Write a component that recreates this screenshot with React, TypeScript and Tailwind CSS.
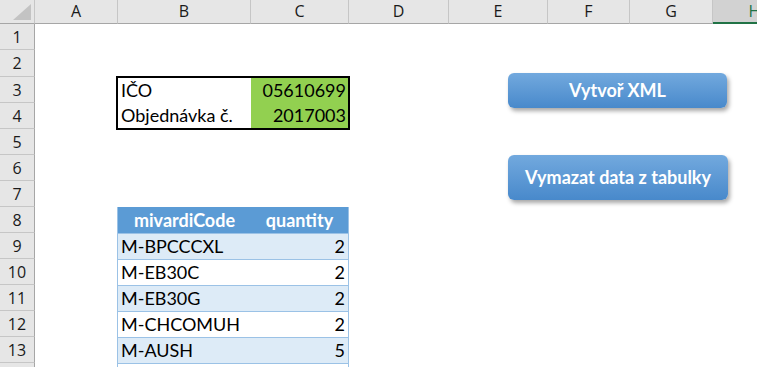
import React from "react";

const cols: { label: string; w: string; sel?: boolean }[] = [
  { label: "A", w: "w-[83px]" },
  { label: "B", w: "w-[133px]" },
  { label: "C", w: "w-[98px]" },
  { label: "D", w: "w-[100px]" },
  { label: "E", w: "w-[99px]" },
  { label: "F", w: "w-[82px]" },
  { label: "G", w: "w-[83px]" },
  { label: "H", w: "w-[83px]", sel: true },
];

const rowHeights = ["h-[26px]", "h-[27px]", "h-[26px]", "h-[26px]", "h-[26px]", "h-[26px]", "h-[26px]", "h-[26px]", "h-[26px]", "h-[26px]", "h-[26px]", "h-[26px]", "h-[26px]"];

const data = [
  { code: "M-BPCCCXL", q: 2 },
  { code: "M-EB30C", q: 2 },
  { code: "M-EB30G", q: 2 },
  { code: "M-CHCOMUH", q: 2 },
  { code: "M-AUSH", q: 5 },
];

export default function App() {
  return (
    <div className="relative w-[757px] h-[367px] overflow-hidden bg-white">
      {/* Column headers */}
      <div className="flex h-[24px] font-['Open_Sans',sans-serif] text-[16px] text-[#1a1a1a]">
        <div className="relative w-[35px] shrink-0 h-full bg-[#e6e6e6] border-r border-b border-[#a6a6a6] border-r-[#c6c6c6]">
          <svg className="absolute left-0 top-0" width="34" height="23" viewBox="0 0 34 23">
            <polygon points="31,4 31,20 13,20" fill="#c3c3c3" />
          </svg>
        </div>
        {cols.map((c) => (
          <div
            key={c.label}
            className={
              c.sel
                ? `${c.w} shrink-0 h-full flex items-center justify-center bg-[#d2d2d2] border-b-2 border-[#217346] text-[#217346] leading-none`
                : `${c.w} shrink-0 h-full flex items-center justify-center bg-[#e6e6e6] border-r border-b border-[#a6a6a6] border-r-[#c6c6c6] leading-none`
            }
          >
            <span className="-mt-px">{c.label}</span>
          </div>
        ))}
      </div>

      <div className="flex">
        {/* Row headers */}
        <div className="w-[35px] shrink-0 flex flex-col font-['Open_Sans',sans-serif] text-[16px] text-[#1a1a1a]">
          {rowHeights.map((h, i) => (
            <div
              key={i}
              className={`${h} shrink-0 flex items-center justify-center bg-[#e6e6e6] border-r border-b border-[#c6c6c6] border-r-[#a6a6a6] leading-none`}
            >
              {i + 1}
            </div>
          ))}
          <div className="h-[26px] shrink-0 bg-[#e6e6e6] border-r border-[#a6a6a6]" />
        </div>

        {/* Sheet */}
        <div className="flex-1 flex flex-col pl-[81px] font-['Lato',sans-serif] text-[18px] text-black">
          <div className="h-[52px] shrink-0" />
          <div className="w-[234px] h-[54px] border-2 border-black flex shrink-0">
            <div className="w-[133px] flex flex-col">
              <div className="h-[25px] flex items-center pl-[3px]">IČO</div>
              <div className="h-[25px] flex items-center pl-[3px]">Objednávka č.</div>
            </div>
            <div className="flex-1 flex flex-col bg-[#92d050]">
              <div className="h-[25px] flex items-center justify-end pr-[2px]">05610699</div>
              <div className="h-[25px] flex items-center justify-end pr-[2px]">2017003</div>
            </div>
          </div>
          <div className="h-[77px] shrink-0" />
          <div className="ml-px w-[232px] border-x border-[#9bc2e6] flex flex-col">
            <div className="h-[26px] flex bg-[#5b9bd5] text-white font-bold">
              <div className="w-[133px] flex items-center justify-center">mivardiCode</div>
              <div className="flex-1 flex items-center justify-center">quantity</div>
            </div>
            {data.map((r, i) => (
              <div
                key={r.code}
                className={`h-[26px] flex border-t border-[#9bc2e6] ${i % 2 === 0 ? "bg-[#ddebf7]" : "bg-white"}`}
              >
                <div className="w-[133px] flex items-center pl-[3px]">{r.code}</div>
                <div className="flex-1 flex items-center justify-end pr-[3px]">{r.q}</div>
              </div>
            ))}
            <div className="h-[26px] border-t border-[#9bc2e6] bg-white" />
          </div>
        </div>
      </div>

      {/* Floating shape buttons */}
      <div className="absolute left-[508px] top-[73px] w-[219px] h-[35px] rounded-[6px] bg-gradient-to-b from-[#72a9de] to-[#4889cb] shadow-[2px_3px_4px_rgba(0,0,0,0.35)] flex items-center justify-center text-white font-bold font-['Lato',sans-serif] text-[18px]">
        Vytvoř XML
      </div>
      <div className="absolute left-[508px] top-[155px] w-[220px] h-[45px] rounded-[6px] bg-gradient-to-b from-[#72a9de] to-[#4889cb] shadow-[2px_3px_4px_rgba(0,0,0,0.35)] flex items-center justify-center text-white font-bold font-['Lato',sans-serif] text-[18px]">
        Vymazat data z tabulky
      </div>
    </div>
  );
}
